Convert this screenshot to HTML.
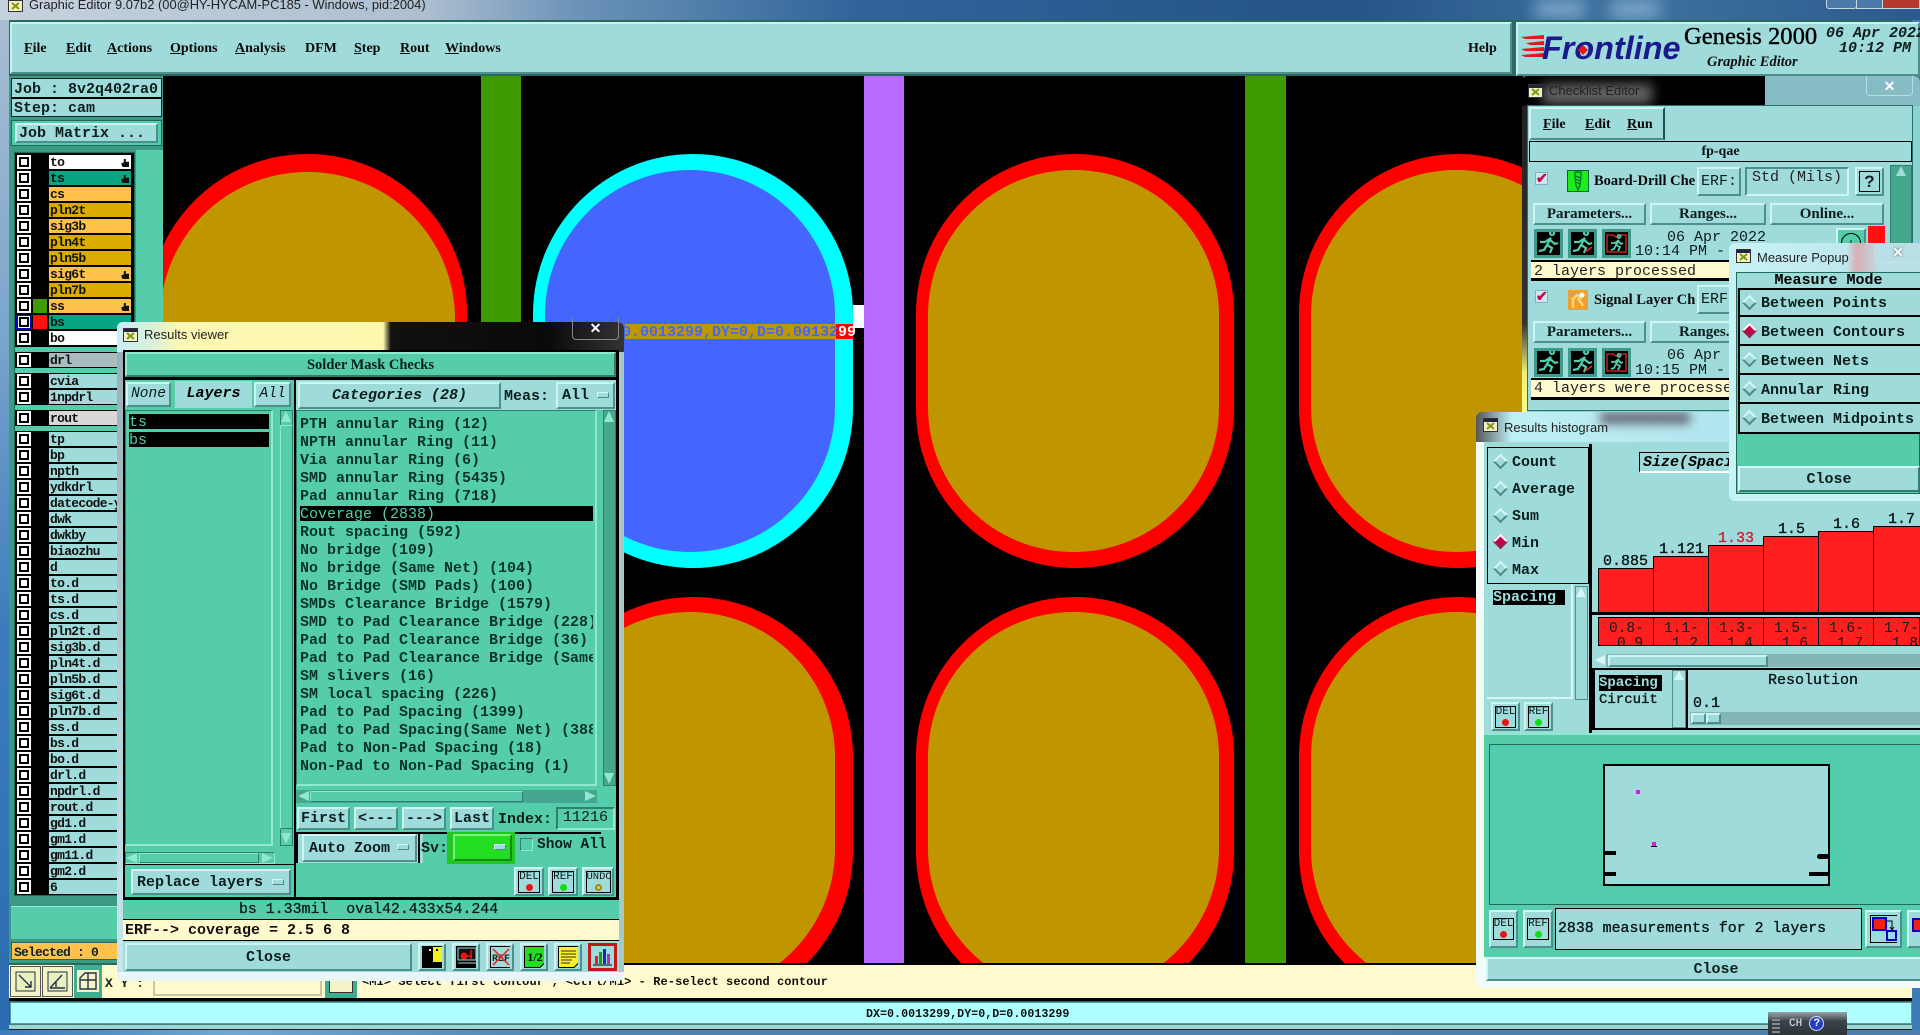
<!DOCTYPE html>
<html><head><meta charset="utf-8"><title>Graphic Editor</title>
<style>
html,body{margin:0;padding:0;width:1920px;height:1035px;overflow:hidden;background:#3d7cb5}
div,span,svg,i{box-sizing:border-box}
.a{position:absolute}
.t{position:absolute;margin-top:1px;white-space:pre;font:bold 15px/15px "Liberation Mono",monospace;color:#0c1f1c}
.s{position:absolute;white-space:pre;font:bold 14px/16px "Liberation Serif",serif;color:#0a0a0a}
.u{text-decoration:underline}
.bt{position:absolute;background:#9fdbdb;border:2px solid;border-color:#cdf5f2 #4d8f8a #4d8f8a #cdf5f2;display:flex;align-items:center;justify-content:center;white-space:pre;font:bold 15px/15px "Liberation Mono",monospace;color:#0c1f1c}
.tl{position:absolute;background:#55ccaa}
.bk{position:absolute;background:#000}
.lb{position:absolute;background:#9fdbdb}
.nm{position:absolute;left:49px;width:82px;height:14px;font:bold 13px/15px "Liberation Mono",monospace;letter-spacing:-.7px;color:#111;padding-left:1px;white-space:pre;overflow:hidden;background:#9fdbdb}
.ck{position:absolute;left:17px;width:14px;height:14px;background:#fff;padding:2px}
.ck i{display:block;width:10px;height:10px;border:2px solid #000;background:#fff}
.dm{position:absolute;width:11px;height:11px;transform:rotate(45deg);background:#9fdbdb;border:2px solid;border-color:#d4f7f5 #4d8a86 #4d8a86 #d4f7f5}
.dm.on{background:#c4004a;border-color:#fff #8a2a50 #8a2a50 #fff}
.ar{position:absolute;width:0;height:0;border:5px solid transparent}
.sb{position:absolute;background:#45a88e;border:1px solid #2f7f6f}
.hand{position:absolute;left:121px;width:8px;height:8px;background:#111;clip-path:polygon(35% 0,60% 0,60% 35%,100% 35%,100% 100%,20% 100%,0 60%,35% 40%)}
.tog{position:absolute;width:12px;height:6px;background:#9fdbdb;border:1px solid;border-color:#d4f7f5 #4d8a86 #4d8a86 #d4f7f5}
</style></head>
<body>

<!-- window title bar -->
<div class="a" style="left:0;top:0;width:1920px;height:20px;background:linear-gradient(90deg,#c5d2de 0,#aebfd0 22%,#6c93b8 30%,#2f6399 45%,#255487 70%,#3e729f 85%,#2b5a8e 100%)"></div>
<div class="a" style="left:1535px;top:0;width:50px;height:18px;background:#7fa8cc;filter:blur(8px)"></div>
<div class="a" style="left:1610px;top:0;width:50px;height:18px;background:#7fa8cc;filter:blur(8px)"></div>
<svg class="a" style="left:8px;top:0" width="16" height="13"><rect x=".5" y=".5" width="14" height="11" fill="#f5f0c8" stroke="#333"/><path d="M4 3l7 6M11 3l-7 6" stroke="#7a9a10" stroke-width="2"/></svg>
<div class="a" style="left:29px;top:-2px;font:12.9px/14px 'Liberation Sans',sans-serif;color:#222;white-space:pre">Graphic Editor 9.07b2 (00@HY-HYCAM-PC185 - Windows, pid:2004)</div>
<div class="a" style="left:1826px;top:-4px;width:31px;height:13px;border:1px solid #c8d6e4;border-radius:3px;background:#4b7baa"></div>
<div class="a" style="left:1856px;top:-4px;width:27px;height:13px;border:1px solid #c8d6e4;background:#4b7baa"></div>
<div class="a" style="left:1882px;top:-4px;width:38px;height:13px;border:1px solid #c8d6e4;background:#b5392a"></div>

<!-- frame -->
<div class="a" style="left:0;top:20px;width:9px;height:1015px;background:linear-gradient(180deg,#a8bed2,#7da6cc 30%,#3c7cbc 60%,#2a6cb0)"></div>
<div class="a" style="left:9px;top:20px;width:1903px;height:1010px;background:#2a6a60"></div>

<!-- menu bar -->
<div class="lb" style="left:10px;top:22px;width:1502px;height:52px;border:2px solid;border-color:#c8f2f0 #4d8f8a #4d8f8a #c8f2f0"></div>
<div class="s" style="left:24px;top:41px"><span class="u">F</span>ile</div>
<div class="s" style="left:66px;top:41px"><span class="u">E</span>dit</div>
<div class="s" style="left:107px;top:41px"><span class="u">A</span>ctions</div>
<div class="s" style="left:170px;top:41px"><span class="u">O</span>ptions</div>
<div class="s" style="left:235px;top:41px"><span class="u">A</span>nalysis</div>
<div class="s" style="left:305px;top:41px">DFM</div>
<div class="s" style="left:354px;top:41px"><span class="u">S</span>tep</div>
<div class="s" style="left:400px;top:41px"><span class="u">R</span>out</div>
<div class="s" style="left:445px;top:41px"><span class="u">W</span>indows</div>
<div class="s" style="left:1468px;top:41px">Help</div>

<!-- logo area -->
<div class="lb" style="left:1516px;top:22px;width:404px;height:54px;border:2px solid;border-color:#c8f2f0 #4d8f8a #4d8f8a #c8f2f0"></div>
<svg class="a" style="left:1520px;top:34px" width="26" height="26"><path d="M1 3L24 1V5L5 5ZM6 9L24 7V11L10 11ZM1 15L24 13V17L5 17ZM1 21L24 19V23L5 23Z" fill="#e81818"/></svg>
<div class="a" style="left:1542px;top:29px;font:italic bold 32.4px/38px 'Liberation Sans',sans-serif;color:#1a1a8c;white-space:pre">Frontline</div>
<svg class="a" style="left:1578px;top:45px" width="10" height="10"><path d="M5 0l5 5-5 5-5-5z" fill="#e81818"/></svg>
<div class="a" style="left:1684px;top:23px;font:24.6px/28px 'Liberation Serif',serif;-webkit-text-stroke:.4px #000;color:#000;white-space:pre">Genesis 2000</div>
<div class="a" style="left:1707px;top:54px;font:italic bold 14.5px/16px 'Liberation Serif',serif;color:#111;white-space:pre">Graphic Editor</div>
<div class="t" style="left:1826px;top:25px;font-style:italic">06 Apr 2022</div>
<div class="t" style="left:1839px;top:40px;font-style:italic">10:12 PM</div>

<!-- left panel -->
<div class="tl" style="left:9px;top:76px;width:154px;height:887px;background:#3a9a84"></div>
<div class="lb" style="left:11px;top:78px;width:151px;height:39px;border:1px solid #123"></div>
<div class="bk" style="left:12px;top:97px;width:149px;height:2px"></div>
<div class="t" style="left:14px;top:81px;letter-spacing:0">Job : 8v2q402ra0</div>
<div class="t" style="left:14px;top:100px">Step: cam</div>
<div class="tl" style="left:11px;top:120px;width:151px;height:26px;border:1px solid #1f6b5a"></div>
<div class="bt" style="left:15px;top:123px;width:143px;height:20px;justify-content:flex-start;padding-left:2px">Job Matrix ...</div>
<div class="tl" style="left:136px;top:150px;width:27px;height:813px"></div>
<div class="bk" style="left:14px;top:152px;width:121px;height:744px;border:1px solid #1f6b5a"></div>

<!-- layers -->
<div class="ck" style="top:155px"><i></i></div><div class="nm" style="top:155px;background:#fff">to</div><div class="hand" style="top:159px"></div>
<div class="ck" style="top:171px"><i></i></div><div class="nm" style="top:171px;background:#07a682">ts</div><div class="hand" style="top:175px"></div>
<div class="ck" style="top:187px"><i></i></div><div class="nm" style="top:187px;background:#ffc34d">cs</div>
<div class="ck" style="top:203px"><i></i></div><div class="nm" style="top:203px;background:#dbab00">pln2t</div>
<div class="ck" style="top:219px"><i></i></div><div class="nm" style="top:219px;background:#ffc34d">sig3b</div>
<div class="ck" style="top:235px"><i></i></div><div class="nm" style="top:235px;background:#dbab00">pln4t</div>
<div class="ck" style="top:251px"><i></i></div><div class="nm" style="top:251px;background:#dbab00">pln5b</div>
<div class="ck" style="top:267px"><i></i></div><div class="nm" style="top:267px;background:#ffc34d">sig6t</div><div class="hand" style="top:271px"></div>
<div class="ck" style="top:283px"><i></i></div><div class="nm" style="top:283px;background:#dbab00">pln7b</div>
<div class="ck" style="top:299px"><i></i></div><div class="a" style="left:33px;top:299px;width:14px;height:14px;background:#3f9a00"></div><div class="nm" style="top:299px;background:#ffc34d">ss</div><div class="hand" style="top:303px"></div>
<div class="a" style="left:16px;top:315px;width:16px;height:15px;background:#0000c0;padding:2px 3px"><div style="width:10px;height:10px;border:2px solid #000;background:#fff;outline:1px solid #fff"></div></div><div class="a" style="left:33px;top:315px;width:14px;height:14px;background:#f11"></div><div class="nm" style="top:315px;background:#07a682">bs</div>
<div class="ck" style="top:331px"><i></i></div><div class="nm" style="top:331px;background:#fff">bo</div>
<div class="tl" style="left:15px;top:347px;width:119px;height:5px"></div>
<div class="ck" style="top:353px"><i></i></div><div class="nm" style="top:353px;background:#a8bcc0">drl</div>
<div class="tl" style="left:15px;top:368px;width:119px;height:5px"></div>
<div class="ck" style="top:374px"><i></i></div><div class="nm" style="top:374px">cvia</div>
<div class="ck" style="top:390px"><i></i></div><div class="nm" style="top:390px">1npdrl</div>
<div class="tl" style="left:15px;top:405px;width:119px;height:5px"></div>
<div class="ck" style="top:411px"><i></i></div><div class="nm" style="top:411px;background:#d8d8d8">rout</div>
<div class="tl" style="left:15px;top:426px;width:119px;height:5px"></div>
<div class="ck" style="top:432px"><i></i></div><div class="nm" style="top:432px">tp</div>
<div class="ck" style="top:448px"><i></i></div><div class="nm" style="top:448px">bp</div>
<div class="ck" style="top:464px"><i></i></div><div class="nm" style="top:464px">npth</div>
<div class="ck" style="top:480px"><i></i></div><div class="nm" style="top:480px">ydkdrl</div>
<div class="ck" style="top:496px"><i></i></div><div class="nm" style="top:496px">datecode-y</div>
<div class="ck" style="top:512px"><i></i></div><div class="nm" style="top:512px">dwk</div>
<div class="ck" style="top:528px"><i></i></div><div class="nm" style="top:528px">dwkby</div>
<div class="ck" style="top:544px"><i></i></div><div class="nm" style="top:544px">biaozhu</div>
<div class="ck" style="top:560px"><i></i></div><div class="nm" style="top:560px">d</div>
<div class="ck" style="top:576px"><i></i></div><div class="nm" style="top:576px">to.d</div>
<div class="ck" style="top:592px"><i></i></div><div class="nm" style="top:592px">ts.d</div>
<div class="ck" style="top:608px"><i></i></div><div class="nm" style="top:608px">cs.d</div>
<div class="ck" style="top:624px"><i></i></div><div class="nm" style="top:624px">pln2t.d</div>
<div class="ck" style="top:640px"><i></i></div><div class="nm" style="top:640px">sig3b.d</div>
<div class="ck" style="top:656px"><i></i></div><div class="nm" style="top:656px">pln4t.d</div>
<div class="ck" style="top:672px"><i></i></div><div class="nm" style="top:672px">pln5b.d</div>
<div class="ck" style="top:688px"><i></i></div><div class="nm" style="top:688px">sig6t.d</div>
<div class="ck" style="top:704px"><i></i></div><div class="nm" style="top:704px">pln7b.d</div>
<div class="ck" style="top:720px"><i></i></div><div class="nm" style="top:720px">ss.d</div>
<div class="ck" style="top:736px"><i></i></div><div class="nm" style="top:736px">bs.d</div>
<div class="ck" style="top:752px"><i></i></div><div class="nm" style="top:752px">bo.d</div>
<div class="ck" style="top:768px"><i></i></div><div class="nm" style="top:768px">drl.d</div>
<div class="ck" style="top:784px"><i></i></div><div class="nm" style="top:784px">npdrl.d</div>
<div class="ck" style="top:800px"><i></i></div><div class="nm" style="top:800px">rout.d</div>
<div class="ck" style="top:816px"><i></i></div><div class="nm" style="top:816px">gd1.d</div>
<div class="ck" style="top:832px"><i></i></div><div class="nm" style="top:832px">gm1.d</div>
<div class="ck" style="top:848px"><i></i></div><div class="nm" style="top:848px">gm11.d</div>
<div class="ck" style="top:864px"><i></i></div><div class="nm" style="top:864px">gm2.d</div>
<div class="ck" style="top:880px"><i></i></div><div class="nm" style="top:880px">6</div>

<div class="tl" style="left:11px;top:906px;width:150px;height:33px;border-top:1px solid #9fe8d8"></div>
<div class="a" style="left:11px;top:942px;width:118px;height:18px;background:#ffc34d;border:1px solid #1f6b5a"></div>
<div class="t" style="left:14px;top:944px;font-size:13px;letter-spacing:-.8px">Selected : 0</div>

<!-- canvas -->
<div class="a" style="left:163px;top:76px;width:1360px;height:887px;background:#000;overflow:hidden">
<svg width="1360" height="887" viewBox="163 76 1360 887">
<rect x="481" y="76" width="40" height="887" fill="#3f9a00"/>
<rect x="864" y="76" width="40" height="887" fill="#b86cff"/>
<rect x="1245" y="76" width="41" height="887" fill="#3f9a00"/>
<g fill="#f00">
<rect x="148" y="154" width="319" height="414" rx="159"/>
<rect x="916" y="154" width="318" height="414" rx="159"/>
<rect x="1299" y="154" width="318" height="414" rx="159"/>
<rect x="533" y="597" width="320" height="414" rx="160"/>
<rect x="916" y="597" width="318" height="414" rx="159"/>
<rect x="1299" y="597" width="318" height="414" rx="159"/>
</g>
<rect x="533" y="154" width="320" height="414" rx="160" fill="#0ff"/>
<g fill="#bf9600">
<rect x="160" y="172" width="295" height="382" rx="147"/>
<rect x="928" y="170" width="291" height="382" rx="145"/>
<rect x="1311" y="170" width="291" height="382" rx="145"/>
<rect x="545" y="612" width="290" height="382" rx="145"/>
<rect x="928" y="612" width="291" height="382" rx="145"/>
<rect x="1311" y="612" width="291" height="382" rx="145"/>
</g>
<rect x="545" y="170" width="290" height="382" rx="145" fill="#4466ff"/>
<rect x="625" y="324" width="211" height="15" fill="#bf9600"/>
<rect x="836" y="324" width="17" height="15" fill="#f00"/>
<rect x="853" y="305" width="11" height="23" fill="#fff"/>
<text x="595" y="336" font-family="Liberation Mono,monospace" font-size="15" font-weight="bold" fill="#4466ff">DX=0.0013299,DY=0,D=0.00132<tspan fill="#fff">99</tspan></text>
</svg>
</div>
<div class="bk" style="left:163px;top:963px;width:1757px;height:2px"></div>

<!-- bottom toolbar -->
<div class="a" style="left:9px;top:965px;width:1903px;height:33px;background:#fffacd"></div>
<div class="a" style="left:10px;top:966px;width:31px;height:31px;background:#f4f4c8;border:1px solid #555;padding:4px"><svg width="21" height="21"><rect x="1" y="1" width="19" height="19" fill="#e8f0c0" stroke="#234" stroke-width="1"/><path d="M4 4L16 16M16 10V16H10" fill="none" stroke="#234" stroke-width="1.4"/></svg></div>
<div class="a" style="left:42px;top:966px;width:31px;height:31px;background:#f4f4c8;border:1px solid #555;padding:4px"><svg width="21" height="21"><rect x="1" y="1" width="19" height="19" fill="#e8f0c0" stroke="#234"/><path d="M3 17H18M3 17L15 4M9 11v5" fill="none" stroke="#234" stroke-width="1.4"/></svg></div>
<div class="a" style="left:74px;top:965px;width:28px;height:33px;background:#3fae90;padding:5px 3px"><svg width="22" height="22"><rect width="22" height="22" fill="#f4f4c8"/><path d="M3 19V8L8 3H19V19ZM3 10H19M11 3V19" fill="none" stroke="#234" stroke-width="1.4"/></svg></div>
<div class="t" style="left:105px;top:975px;font-size:13px">X Y :</div>
<div class="a" style="left:153px;top:967px;width:169px;height:29px;background:#fffacd;border:2px solid #c9c9a0"></div>
<div class="a" style="left:325px;top:965px;width:32px;height:33px;background:#3fae90;padding:4px"><div style="width:24px;height:24px;background:#f4f4c8;border:1px solid #333"></div></div>
<div class="t" style="left:362px;top:975px;font-size:12px;line-height:13px;color:#111;letter-spacing:.08px">&lt;M1&gt; Select first contour ; &lt;Ctrl/M1&gt; - Re-select second contour</div>
<div class="bk" style="left:9px;top:998px;width:1903px;height:3px"></div>
<div class="a" style="left:10px;top:1002px;width:1902px;height:22px;background:#b0ffff;border:1px solid #5a9a9a"></div>
<div class="t" style="left:866px;top:1007px;font-size:11.7px;line-height:12px;color:#111">DX=0.0013299,DY=0,D=0.0013299</div>
<div class="a" style="left:9px;top:1024px;width:1903px;height:6px;background:#9ed6d6;border-bottom:1px solid #222;border-top:1px solid #44807d"></div>
<div class="a" style="left:0;top:1030px;width:1920px;height:5px;background:linear-gradient(90deg,#3c7cbc,#6fa8d8 12%,#4e83b5 30%,#4c7fae)"></div>

<!-- Checklist Editor -->
<div class="a" style="left:1522px;top:76px;width:398px;height:340px;background:#000;border-radius:6px 6px 0 0;overflow:hidden">
 <div class="a" style="left:243px;top:0;width:155px;height:30px;background:#86bcc4"></div>
 <div class="a" style="left:20px;top:8px;width:110px;height:20px;background:#666;filter:blur(6px)"></div>
 <div class="a" style="left:0;top:30px;width:398px;height:310px;background:#8bd2d2"></div>
 <div class="a" style="left:0;top:30px;width:5px;height:310px;background:linear-gradient(180deg,#222,#333 70%,#eeee77 86%,#ffff88)"></div>
</div>
<svg class="a" style="left:1528px;top:84px" width="16" height="15"><rect x=".5" y=".5" width="14" height="13" fill="#f5f0c8" stroke="#333"/><rect x="1" y="1" width="13" height="3" fill="#224"/><path d="M4 5l7 6M11 5l-7 6" stroke="#7a9a10" stroke-width="2"/></svg>
<div class="a" style="left:1549px;top:83px;font:13px/15px 'Liberation Sans',sans-serif;color:#222;white-space:pre">Checklist Editor</div>
<div class="a" style="left:1866px;top:76px;width:47px;height:20px;border:1px solid #b8dfe4;border-top:0;border-radius:0 0 4px 4px;color:#fff;font:bold 14px/20px 'Liberation Sans',sans-serif;text-align:center">✕</div>
<div class="lb" style="left:1527px;top:105px;width:386px;height:306px;border:1px solid #2c6f66"></div>
<div class="bt" style="left:1529px;top:107px;width:136px;height:33px;border-right-color:#1f4f4a"></div>
<div class="s" style="left:1543px;top:117px"><span class="u">F</span>ile</div>
<div class="s" style="left:1585px;top:117px"><span class="u">E</span>dit</div>
<div class="s" style="left:1627px;top:117px"><span class="u">R</span>un</div>
<div class="lb" style="left:1529px;top:141px;width:383px;height:21px;border:1px solid #000;text-align:center;font:bold 14px/19px 'Liberation Serif',serif;color:#111">fp-qae</div>
<div class="sb" style="left:1890px;top:165px;width:22px;height:246px"></div>
<div class="ar" style="left:1896px;top:166px;border-bottom:10px solid #9fdbdb;border-top:0"></div>
<!-- row1 -->
<div class="a" style="left:1535px;top:172px;width:13px;height:13px;background:#cbe9e9;border:1px solid #8ac;color:#c4004a;font:bold 14px/11px 'Liberation Sans',sans-serif">✔</div>
<div class="a" style="left:1567px;top:170px;width:22px;height:22px;background:#18ee18;border:1px solid #064"><svg width="20" height="20"><path d="M7 1h6v4l-1 9-2 5-2-5-1-9zM7 5l6 2M7.500 8l5 2M8 11l4 2" fill="none" stroke="#063" stroke-width="1.200"/></svg></div>
<div class="s" style="left:1594px;top:173px;width:101px;overflow:hidden;font-size:14.5px">Board-Drill Chec</div>
<div class="bt" style="left:1697px;top:167px;width:44px;height:29px;font-weight:normal">ERF:</div>
<div class="a" style="left:1745px;top:167px;width:104px;height:29px;border:2px solid;border-color:#4d8f8a #cdf5f2 #cdf5f2 #4d8f8a;font:15px/15px 'Liberation Mono',monospace;padding:1px 0 0 5px;color:#222;white-space:pre">Std (Mils)</div>
<div class="bt" style="left:1855px;top:167px;width:29px;height:29px;padding:2px"><div style="width:21px;height:21px;border:1px solid #000;font:bold 17px/19px 'Liberation Sans',sans-serif;text-align:center">?</div></div>
<div class="bt" style="left:1533px;top:203px;width:113px;height:22px;font:bold 15px/16px 'Liberation Serif',serif">Parameters...</div>
<div class="bt" style="left:1650px;top:203px;width:116px;height:22px;font:bold 15px/16px 'Liberation Serif',serif">Ranges...</div>
<div class="bt" style="left:1770px;top:203px;width:114px;height:22px;font:bold 15px/16px 'Liberation Serif',serif">Online...</div>
<!-- runner icons row1 -->
<div class="a" style="left:1534px;top:229px;width:29px;height:29px;background:#000;border:3px solid #3e9a8a"><svg width="23" height="23"><path d="M15 3a2 2 0 1 1 .1 0M14 6L8 10H3M14 6L10 13l5 3-2 5M10 13L7 18l-5 1M13 8l5 4 3-1" fill="none" stroke="#55ccaa" stroke-width="2.2"/></svg></div>
<div class="a" style="left:1568px;top:229px;width:29px;height:29px;background:#000;border:3px solid #3e9a8a"><svg width="23" height="23"><path d="M15 3a2 2 0 1 1 .1 0M14 6L8 10H3M14 6L10 13l5 3-2 5M10 13L7 18l-5 1M13 8l5 4 3-1" fill="none" stroke="#55ccaa" stroke-width="2.2"/><path d="M14 20l7-5" stroke="#e22" stroke-width="1.5"/></svg></div>
<div class="a" style="left:1602px;top:229px;width:29px;height:29px;background:#000;border:3px solid #3e9a8a"><svg width="23" height="23"><path d="M2 3h6l3 2 3-2h7v17H2z" fill="none" stroke="#e22" stroke-width="1.3"/><path d="M14 6a1.500 1.500 0 1 1 .1 0M14 8L10 11H6M14 8l-3 5 4 2-2 4M11 13l-2 4-3 1M13 9l3 3 2-1" fill="none" stroke="#55ccaa" stroke-width="1.800"/></svg></div>
<div class="t" style="left:1667px;top:229px;font-weight:normal">06 Apr 2022</div>
<div class="t" style="left:1635px;top:243px;font-weight:normal">10:14 PM -</div>
<div class="bt" style="left:1836px;top:228px;width:30px;height:30px;background:#55ccaa"><div style="width:20px;height:20px;border:1px solid #000;border-radius:50%;text-align:center;font:14px/18px 'Liberation Sans',sans-serif">+</div></div>
<div class="a" style="left:1868px;top:226px;width:17px;height:34px;background:#f11"></div>
<div class="bk" style="left:1531px;top:260px;width:355px;height:2px"></div>
<div class="a" style="left:1531px;top:262px;width:355px;height:19px;background:#fffacd;font:15px/19px 'Liberation Mono',monospace;color:#222;padding-left:3px;white-space:pre;border-bottom:3px solid #000">2 layers processed</div>
<!-- row2 -->
<div class="a" style="left:1535px;top:290px;width:13px;height:13px;background:#cbe9e9;border:1px solid #8ac;color:#c4004a;font:bold 14px/11px 'Liberation Sans',sans-serif">✔</div>
<div class="a" style="left:1568px;top:290px;width:20px;height:20px;background:#f0a030"><svg width="20" height="20"><path d="M5 18V9l4-4 5 3M10 8l5 8" fill="none" stroke="#ffd880" stroke-width="2.500"/><circle cx="14" cy="5" r="2.500" fill="#ffe"/></svg></div>
<div class="s" style="left:1594px;top:292px;width:101px;overflow:hidden;font-size:14.5px">Signal Layer Che</div>
<div class="bt" style="left:1697px;top:285px;width:44px;height:29px;font-weight:normal">ERF:</div>
<div class="bt" style="left:1533px;top:321px;width:113px;height:22px;font:bold 15px/16px 'Liberation Serif',serif">Parameters...</div>
<div class="bt" style="left:1650px;top:321px;width:116px;height:22px;font:bold 15px/16px 'Liberation Serif',serif">Ranges...</div>
<div class="a" style="left:1534px;top:348px;width:29px;height:29px;background:#000;border:3px solid #3e9a8a"><svg width="23" height="23"><path d="M15 3a2 2 0 1 1 .1 0M14 6L8 10H3M14 6L10 13l5 3-2 5M10 13L7 18l-5 1M13 8l5 4 3-1" fill="none" stroke="#55ccaa" stroke-width="2.2"/></svg></div>
<div class="a" style="left:1568px;top:348px;width:29px;height:29px;background:#000;border:3px solid #3e9a8a"><svg width="23" height="23"><path d="M15 3a2 2 0 1 1 .1 0M14 6L8 10H3M14 6L10 13l5 3-2 5M10 13L7 18l-5 1M13 8l5 4 3-1" fill="none" stroke="#55ccaa" stroke-width="2.2"/><path d="M14 20l7-5" stroke="#e22" stroke-width="1.5"/></svg></div>
<div class="a" style="left:1602px;top:348px;width:29px;height:29px;background:#000;border:3px solid #3e9a8a"><svg width="23" height="23"><path d="M2 3h6l3 2 3-2h7v17H2z" fill="none" stroke="#e22" stroke-width="1.3"/><path d="M14 6a1.500 1.500 0 1 1 .1 0M14 8L10 11H6M14 8l-3 5 4 2-2 4M11 13l-2 4-3 1M13 9l3 3 2-1" fill="none" stroke="#55ccaa" stroke-width="1.800"/></svg></div>
<div class="t" style="left:1667px;top:347px;font-weight:normal">06 Apr 2022</div>
<div class="t" style="left:1635px;top:362px;font-weight:normal">10:15 PM -</div>
<div class="bk" style="left:1531px;top:378px;width:355px;height:2px"></div>
<div class="a" style="left:1531px;top:380px;width:355px;height:20px;background:#fffacd;font:15px/18px 'Liberation Mono',monospace;color:#222;padding-left:3px;white-space:pre;border-bottom:3px solid #000">4 layers were processed</div>

<!-- Results histogram -->
<div class="a" style="left:1476px;top:412px;width:444px;height:576px;background:#f4fbfb;border-radius:6px 0 0 6px;overflow:hidden">
 <div class="a" style="left:0;top:0;width:444px;height:30px;background:linear-gradient(90deg,#555 0,#bdeff4 8%,#b7e8f0 40%,#a6dcea 100%)"></div>
 <div class="a" style="left:124px;top:0;width:90px;height:12px;background:#667;filter:blur(5px)"></div>
</div>
<svg class="a" style="left:1483px;top:418px" width="16" height="15"><rect x=".5" y=".5" width="14" height="13" fill="#f5f0c8" stroke="#333"/><rect x="1" y="1" width="13" height="3" fill="#224"/><path d="M4 5l7 6M11 5l-7 6" stroke="#7a9a10" stroke-width="2"/></svg>
<div class="a" style="left:1504px;top:420px;font:13px/15px 'Liberation Sans',sans-serif;color:#222;white-space:pre">Results histogram</div>
<div class="lb" style="left:1484px;top:442px;width:436px;height:291px;background:#9fdbdb"></div>
<div class="bk" style="left:1589px;top:444px;width:3px;height:289px"></div>
<div class="lb" style="left:1487px;top:447px;width:102px;height:137px;border:1px solid #000"></div>
<div class="dm" style="left:1495px;top:456px"></div><div class="t" style="left:1512px;top:454px">Count</div>
<div class="dm" style="left:1495px;top:483px"></div><div class="t" style="left:1512px;top:481px">Average</div>
<div class="dm" style="left:1495px;top:510px"></div><div class="t" style="left:1512px;top:508px">Sum</div>
<div class="dm on" style="left:1495px;top:536px"></div><div class="t" style="left:1512px;top:535px">Min</div>
<div class="dm" style="left:1495px;top:563px"></div><div class="t" style="left:1512px;top:562px">Max</div>
<div class="a" style="left:1487px;top:584px;width:86px;height:115px;border-right:2px solid #d4f7f5;border-bottom:2px solid #d4f7f5"></div>
<div class="bk" style="left:1493px;top:590px;width:72px;height:15px"></div>
<div class="t" style="left:1493px;top:589px;color:#9fdbdb">Spacing</div>
<div class="a" style="left:1575px;top:586px;width:13px;height:114px;background:#9fdbdb;border:1px solid #4d8f8a"></div>
<div class="ar" style="left:1576px;top:587px;border-bottom:10px solid #d4f7f5;border-top:0"></div>
<div class="bt" style="left:1491px;top:702px;width:29px;height:29px;padding:2px"><div style="width:22px;height:22px;border:1px solid #000;font:11px/11px 'Liberation Mono',monospace;text-align:center;font-weight:normal">DEL<div style="width:7px;height:7px;background:#e11;border-radius:50%;margin:1px auto"></div></div></div>
<div class="bt" style="left:1524px;top:702px;width:29px;height:29px;padding:2px"><div style="width:22px;height:22px;border:1px solid #000;font:11px/11px 'Liberation Mono',monospace;text-align:center;font-weight:normal">REF<div style="width:7px;height:7px;background:#1d1;border-radius:50%;margin:1px auto"></div></div></div>
<div class="a" style="left:1639px;top:452px;width:90px;height:21px;background:#9fdbdb;border:1px solid #000;border-bottom:2px solid #fff;border-right:0;font:italic bold 15px/19px 'Liberation Mono',monospace;padding-left:3px;white-space:pre;overflow:hidden">Size(Spacing)</div>
<!-- bars -->
<div class="a" style="left:1598px;top:568px;width:56px;height:44px;background:#ff1f1f;border:1px solid #000;border-bottom:0"></div>
<div class="a" style="left:1653px;top:556px;width:56px;height:56px;background:#ff1f1f;border:1px solid #000;border-bottom:0"></div>
<div class="a" style="left:1708px;top:545px;width:56px;height:67px;background:#ff1f1f;border:1px solid #000;border-bottom:0"></div>
<div class="a" style="left:1763px;top:536px;width:56px;height:76px;background:#ff1f1f;border:1px solid #000;border-bottom:0"></div>
<div class="a" style="left:1818px;top:531px;width:56px;height:81px;background:#ff1f1f;border:1px solid #000;border-bottom:0"></div>
<div class="a" style="left:1873px;top:526px;width:47px;height:86px;background:#ff1f1f;border:1px solid #000;border-bottom:0;border-right:0"></div>
<div class="t" style="left:1603px;top:553px;font-weight:normal;-webkit-text-stroke:.3px #000">0.885</div>
<div class="t" style="left:1659px;top:541px;font-weight:normal;-webkit-text-stroke:.3px #000">1.121</div>
<div class="t" style="left:1718px;top:530px;font-weight:normal;color:#d02030;-webkit-text-stroke:.3px #d02030">1.33</div>
<div class="t" style="left:1778px;top:521px;font-weight:normal;-webkit-text-stroke:.3px #000">1.5</div>
<div class="t" style="left:1833px;top:516px;font-weight:normal;-webkit-text-stroke:.3px #000">1.6</div>
<div class="t" style="left:1888px;top:511px;font-weight:normal;-webkit-text-stroke:.3px #000">1.7</div>
<div class="bk" style="left:1592px;top:612px;width:328px;height:3px"></div>
<div class="a" style="left:1598px;top:617px;width:322px;height:29px;background:#ff1f1f;border:1px solid #000;overflow:hidden">
 <div class="t" style="left:10px;top:3px;font-size:14.500px;font-weight:normal">0.8-</div><div class="t" style="left:18px;top:18px;font-size:14.500px;font-weight:normal">0.9</div>
 <div class="bk" style="left:54px;top:0;width:1px;height:29px"></div>
 <div class="t" style="left:65px;top:3px;font-size:14.500px;font-weight:normal">1.1-</div><div class="t" style="left:73px;top:18px;font-size:14.500px;font-weight:normal">1.2</div>
 <div class="bk" style="left:109px;top:0;width:1px;height:29px"></div>
 <div class="t" style="left:120px;top:3px;font-size:14.500px;font-weight:normal">1.3-</div><div class="t" style="left:128px;top:18px;font-size:14.500px;font-weight:normal">1.4</div>
 <div class="bk" style="left:164px;top:0;width:1px;height:29px"></div>
 <div class="t" style="left:175px;top:3px;font-size:14.500px;font-weight:normal">1.5-</div><div class="t" style="left:183px;top:18px;font-size:14.500px;font-weight:normal">1.6</div>
 <div class="bk" style="left:219px;top:0;width:1px;height:29px"></div>
 <div class="t" style="left:230px;top:3px;font-size:14.500px;font-weight:normal">1.6-</div><div class="t" style="left:238px;top:18px;font-size:14.500px;font-weight:normal">1.7</div>
 <div class="bk" style="left:274px;top:0;width:1px;height:29px"></div>
 <div class="t" style="left:285px;top:3px;font-size:14.500px;font-weight:normal">1.7-</div><div class="t" style="left:293px;top:18px;font-size:14.500px;font-weight:normal">1.8</div>
</div>
<div class="a" style="left:1594px;top:654px;width:326px;height:13px;background:#85b5b5"></div>
<div class="a" style="left:1594px;top:654px;width:12px;height:13px;background:#9fdbdb"></div>
<div class="ar" style="left:1595px;top:655px;border-right:10px solid #d4f7f5;border-left:0"></div>
<div class="bt" style="left:1608px;top:655px;width:160px;height:12px"></div>
<div class="bk" style="left:1592px;top:668px;width:328px;height:2px"></div>
<div class="bk" style="left:1592px;top:668px;width:3px;height:62px"></div>
<div class="bk" style="left:1599px;top:675px;width:63px;height:16px"></div>
<div class="t" style="left:1599px;top:675px;color:#9fdbdb;font-size:14px">Spacing</div>
<div class="t" style="left:1599px;top:692px;font-weight:normal;-webkit-text-stroke:.3px #000;font-size:14px">Circuit</div>
<div class="a" style="left:1672px;top:670px;width:14px;height:58px;background:#9fdbdb;border:1px solid #4d8f8a"></div>
<div class="ar" style="left:1674px;top:671px;border-bottom:9px solid #d4f7f5;border-top:0"></div>
<div class="a" style="left:1686px;top:670px;width:2px;height:58px;background:#000"></div>
<div class="t" style="left:1768px;top:672px;font-weight:normal;-webkit-text-stroke:.3px #000">Resolution</div>
<div class="t" style="left:1693px;top:695px;font-weight:normal;-webkit-text-stroke:.3px #000">0.1</div>
<div class="a" style="left:1690px;top:712px;width:230px;height:13px;background:#85b5b5"></div>
<div class="bt" style="left:1691px;top:713px;width:15px;height:11px"></div>
<div class="bt" style="left:1706px;top:713px;width:15px;height:11px"></div>
<div class="bk" style="left:1592px;top:728px;width:328px;height:2px"></div>
<div class="tl" style="left:1484px;top:733px;width:436px;height:224px;background:#55ccaa;border-top:2px solid #8fe8d0"></div>
<div class="a" style="left:1489px;top:744px;width:431px;height:161px;background:#52cdab;border:1px solid #1f6b5a;border-right:0"></div>
<div class="lb" style="left:1603px;top:764px;width:227px;height:122px;border:2px solid #000"></div>
<div class="a" style="left:1636px;top:790px;width:4px;height:4px;background:#d020d0"></div>
<div class="a" style="left:1652px;top:842px;width:4px;height:4px;background:#d020d0"></div>
<div class="bk" style="left:1651px;top:846px;width:6px;height:1px"></div>
<div class="bk" style="left:1603px;top:851px;width:13px;height:4px"></div>
<div class="bk" style="left:1603px;top:872px;width:13px;height:4px"></div>
<div class="bk" style="left:1817px;top:854px;width:12px;height:5px;border-radius:3px"></div>
<div class="bk" style="left:1809px;top:872px;width:20px;height:4px"></div>
<div class="bt" style="left:1489px;top:910px;width:29px;height:38px;padding:2px"><div style="width:22px;height:22px;border:1px solid #000;font:11px/11px 'Liberation Mono',monospace;text-align:center;font-weight:normal">DEL<div style="width:7px;height:7px;background:#e11;border-radius:50%;margin:1px auto"></div></div></div>
<div class="bt" style="left:1523px;top:910px;width:30px;height:38px;padding:2px"><div style="width:22px;height:22px;border:1px solid #000;font:11px/11px 'Liberation Mono',monospace;text-align:center;font-weight:normal">REF<div style="width:7px;height:7px;background:#1d1;border-radius:50%;margin:1px auto"></div></div></div>
<div class="lb" style="left:1555px;top:908px;width:307px;height:42px;border:1px solid #000"></div>
<div class="t" style="left:1558px;top:921px;font-size:14.900px;font-weight:normal;-webkit-text-stroke:.3px #000">2838 measurements for 2 layers</div>
<div class="bt" style="left:1865px;top:910px;width:37px;height:38px;padding:3px"><svg width="29" height="28"><rect x=".5" y=".5" width="28" height="27" fill="#9fdbdb" stroke="#000"/><rect x="3" y="3" width="13" height="12" fill="#e21" stroke="#00c" stroke-width="2"/><rect x="17" y="16" width="9" height="9" fill="#9fdbdb" stroke="#00c" stroke-width="2"/><path d="M17 6h5v8M20 12l2 3 2-3" fill="none" stroke="#000"/></svg></div>
<div class="bt" style="left:1907px;top:910px;width:20px;height:38px"><div class="a" style="left:3px;top:6px;width:14px;height:14px;background:#e21;border:2px solid #00c"></div></div>
<div class="bt" style="left:1486px;top:957px;width:460px;height:24px">Close</div>

<!-- Measure Popup -->
<div class="a" style="left:1729px;top:243px;width:191px;height:258px;background:#c7f2f6;border-radius:6px 0 0 6px"></div>
<div class="a" style="left:1735px;top:243px;width:185px;height:29px;background:linear-gradient(90deg,#c7f2f6,#bfe8ee 60%,#d8aeb4 66%,#b8e0e6 78%)"></div>
<svg class="a" style="left:1736px;top:249px" width="16" height="15"><rect x=".5" y=".5" width="14" height="13" fill="#f5f0c8" stroke="#333"/><rect x="1" y="1" width="13" height="3" fill="#224"/><path d="M4 5l7 6M11 5l-7 6" stroke="#7a9a10" stroke-width="2"/></svg>
<div class="a" style="left:1757px;top:250px;font:13px/15px 'Liberation Sans',sans-serif;color:#222;white-space:pre">Measure Popup</div>
<div class="a" style="left:1875px;top:243px;width:45px;height:20px;border:1px solid #c8e4ea;border-top:0;border-right:0;border-radius:0 0 0 4px;color:#fff;font:bold 14px/19px 'Liberation Sans',sans-serif;text-align:center;text-shadow:0 0 2px #555">✕</div>
<div class="tl" style="left:1736px;top:272px;width:184px;height:222px;border:1px solid #1f6b5a"></div>
<div class="lb" style="left:1737px;top:273px;width:183px;height:15px;text-align:center;font:bold 15px/16px 'Liberation Mono',monospace">Measure Mode</div>
<div class="lb" style="left:1738px;top:288px;width:182px;height:29px;border:2px solid #000;border-right:0"></div>
<div class="lb" style="left:1738px;top:317px;width:182px;height:29px;border:2px solid #000;border-right:0;border-top:0"></div>
<div class="lb" style="left:1738px;top:346px;width:182px;height:29px;border:2px solid #000;border-right:0;border-top:0"></div>
<div class="lb" style="left:1738px;top:375px;width:182px;height:29px;border:2px solid #000;border-right:0;border-top:0"></div>
<div class="lb" style="left:1738px;top:404px;width:182px;height:30px;border:2px solid #000;border-right:0;border-top:0"></div>
<div class="dm" style="left:1744px;top:297px"></div><div class="t" style="left:1761px;top:295px">Between Points</div>
<div class="dm on" style="left:1744px;top:325px"></div><div class="t" style="left:1761px;top:324px">Between Contours</div>
<div class="dm" style="left:1744px;top:354px"></div><div class="t" style="left:1761px;top:353px">Between Nets</div>
<div class="dm" style="left:1744px;top:383px"></div><div class="t" style="left:1761px;top:382px">Annular Ring</div>
<div class="dm" style="left:1744px;top:412px"></div><div class="t" style="left:1761px;top:411px">Between Midpoints</div>
<div class="bt" style="left:1738px;top:466px;width:182px;height:26px;border-color:#d4f7f5 #2f7f6f #2f7f6f #d4f7f5">Close</div>

<!-- Results viewer -->
<div class="a" style="left:117px;top:322px;width:507px;height:659px;background:#e8f6f8;border-radius:6px;overflow:hidden">
 <div class="a" style="left:0;top:0;width:507px;height:30px;background:linear-gradient(90deg,#c9eef5 0,#d9f0d8 7%,#fbf7b4 12%,#fdf8ae 52.5%,#111 54%,#0a0a0a 85%,#333 100%)"></div>
 <div class="a" style="left:0;top:30px;width:6px;height:620px;background:linear-gradient(180deg,#9ab0b8,#c8e6ee)"></div>
 <div class="a" style="left:501px;top:30px;width:6px;height:620px;background:#a8c8c8"></div>
</div>
<svg class="a" style="left:123px;top:328px" width="16" height="15"><rect x=".5" y=".5" width="14" height="13" fill="#f5f0c8" stroke="#333"/><rect x="1" y="1" width="13" height="3" fill="#224"/><path d="M4 5l7 6M11 5l-7 6" stroke="#7a9a10" stroke-width="2"/></svg>
<div class="a" style="left:144px;top:327px;font:13px/15px 'Liberation Sans',sans-serif;color:#222;white-space:pre">Results viewer</div>
<div class="a" style="left:572px;top:318px;width:47px;height:22px;border:1px solid #888;border-top:0;border-radius:0 0 4px 4px;color:#fff;font:bold 14px/20px 'Liberation Sans',sans-serif;text-align:center">✕</div>
<div class="bk" style="left:123px;top:350px;width:496px;height:622px"></div>
<div class="bt" style="left:125px;top:352px;width:491px;height:25px;background:#55ccaa;font:bold 14.500px/16px 'Liberation Serif',serif;border-color:#8fe8d0 #2f7f6f #2f7f6f #8fe8d0">Solder Mask Checks</div>
<!-- left -->
<div class="tl" style="left:125px;top:380px;width:169px;height:517px"></div>
<div class="bt" style="left:126px;top:382px;width:45px;height:25px;font:italic 14.500px/15px 'Liberation Mono',monospace">None</div>
<div class="lb" style="left:175px;top:381px;width:77px;height:27px;text-align:center;font:italic bold 15px/26px 'Liberation Mono',monospace">Layers</div>
<div class="bt" style="left:254px;top:382px;width:37px;height:25px;font:italic 14.500px/15px 'Liberation Mono',monospace">All</div>
<div class="a" style="left:125px;top:410px;width:148px;height:436px;border:1px solid #2f7f6f;border-right:2px solid #8fe8d0;border-bottom:2px solid #8fe8d0"></div>
<div class="bk" style="left:129px;top:414px;width:140px;height:15px"></div><div class="t" style="left:129px;top:414px;color:#55ccaa;font-weight:normal">ts</div>
<div class="bk" style="left:129px;top:432px;width:140px;height:15px"></div><div class="t" style="left:129px;top:432px;color:#55ccaa;font-weight:normal">bs</div>
<div class="sb" style="left:280px;top:410px;width:13px;height:436px;background:#55ccaa"></div>
<div class="ar" style="left:281px;top:411px;border-bottom:11px solid #8fe8d0;border-top:0"></div>
<div class="a" style="left:280px;top:425px;width:13px;height:404px;border:1px solid;border-color:#8fe8d0 #2f7f6f #2f7f6f #8fe8d0;background:#55ccaa"></div>
<div class="ar" style="left:281px;top:833px;border-top:11px solid #8fe8d0;border-bottom:0"></div>
<div class="a" style="left:125px;top:852px;width:150px;height:12px;border:1px solid;border-color:#2f7f6f #8fe8d0 #8fe8d0 #2f7f6f"></div>
<div class="ar" style="left:126px;top:853px;border-right:11px solid #8fe8d0;border-left:0"></div>
<div class="a" style="left:139px;top:853px;width:120px;height:10px;border:1px solid;border-color:#8fe8d0 #2f7f6f #2f7f6f #8fe8d0"></div>
<div class="ar" style="left:262px;top:853px;border-left:11px solid #8fe8d0;border-right:0"></div>
<div class="bk" style="left:125px;top:864px;width:169px;height:1px"></div>
<div class="bt" style="left:131px;top:869px;width:160px;height:26px;justify-content:flex-start;padding-left:4px">Replace layers</div>
<div class="tog" style="left:272px;top:879px"></div>
<!-- right -->
<div class="tl" style="left:296px;top:380px;width:320px;height:517px"></div>
<div class="lb" style="left:296px;top:380px;width:320px;height:30px"></div>
<div class="bt" style="left:298px;top:382px;width:203px;height:27px;font:italic bold 15px/15px 'Liberation Mono',monospace">Categories (28)</div>
<div class="t" style="left:504px;top:388px">Meas:</div>
<div class="bt" style="left:556px;top:382px;width:59px;height:27px;justify-content:flex-start;padding-left:4px">All</div>
<div class="tog" style="left:597px;top:392px"></div>
<div class="a" style="left:296px;top:410px;width:301px;height:376px;border:1px solid #2f7f6f;border-right:2px solid #8fe8d0;border-bottom:2px solid #8fe8d0"></div>
<div class="bk" style="left:300px;top:506px;width:293px;height:15px"></div>
<div class="a" style="left:300px;top:416px;width:293px;height:360px;overflow:hidden;font:bold 15px/18px 'Liberation Mono',monospace;color:#08352b;white-space:pre">PTH annular Ring (12)
NPTH annular Ring (11)
Via annular Ring (6)
SMD annular Ring (5435)
Pad annular Ring (718)
<span style="color:#55ccaa;font-weight:normal">Coverage (2838)</span>
Rout spacing (592)
No bridge (109)
No bridge (Same Net) (104)
No Bridge (SMD Pads) (100)
SMDs Clearance Bridge (1579)
SMD to Pad Clearance Bridge (228)
Pad to Pad Clearance Bridge (36)
Pad to Pad Clearance Bridge (Same Net)
SM slivers (16)
SM local spacing (226)
Pad to Pad Spacing (1399)
Pad to Pad Spacing(Same Net) (388)
Pad to Non-Pad Spacing (18)
Non-Pad to Non-Pad Spacing (1)</div>
<div class="sb" style="left:603px;top:410px;width:13px;height:376px"></div>
<div class="ar" style="left:604px;top:411px;border-bottom:11px solid #8fe8d0;border-top:0"></div>
<div class="ar" style="left:604px;top:773px;border-top:11px solid #8fe8d0;border-bottom:0"></div>
<div class="a" style="left:296px;top:790px;width:301px;height:13px;background:#45a88e"></div>
<div class="ar" style="left:298px;top:791px;border-right:11px solid #8fe8d0;border-left:0"></div>
<div class="a" style="left:310px;top:791px;width:213px;height:11px;background:#55ccaa;border:1px solid;border-color:#8fe8d0 #2f7f6f #2f7f6f #8fe8d0"></div>
<div class="ar" style="left:585px;top:791px;border-left:11px solid #8fe8d0;border-right:0"></div>
<div class="bt" style="left:297px;top:807px;width:53px;height:23px">First</div>
<div class="bt" style="left:354px;top:807px;width:44px;height:23px">&lt;---</div>
<div class="bt" style="left:402px;top:807px;width:44px;height:23px">---&gt;</div>
<div class="bt" style="left:450px;top:807px;width:44px;height:23px">Last</div>
<div class="t" style="left:498px;top:811px">Index:</div>
<div class="a" style="left:556px;top:807px;width:59px;height:23px;border:2px solid;border-color:#2f7f6f #8fe8d0 #8fe8d0 #2f7f6f;font:15px/15px 'Liberation Mono',monospace;padding:1px 0 0 5px;color:#0c1f1c">11216</div>
<div class="bk" style="left:296px;top:832px;width:305px;height:2px"></div>
<div class="a" style="left:296px;top:832px;width:2px;height:31px;background:#000"></div>
<div class="lb" style="left:298px;top:834px;width:125px;height:29px"></div>
<div class="bt" style="left:302px;top:834px;width:115px;height:28px;justify-content:flex-start;padding-left:5px">Auto Zoom</div>
<div class="tog" style="left:397px;top:844px"></div>
<div class="bk" style="left:418px;top:832px;width:2px;height:31px"></div>
<div class="t" style="left:421px;top:840px">Sv:</div>
<div class="a" style="left:447px;top:832px;width:68px;height:32px;background:#22c822"></div>
<div class="a" style="left:453px;top:834px;width:59px;height:27px;background:#22dd22;border:2px solid;border-color:#7cf07c #148a14 #148a14 #7cf07c"></div>
<div class="tog" style="left:494px;top:844px"></div>
<div class="a" style="left:520px;top:838px;width:13px;height:13px;border:1px solid;border-color:#2f7f6f #8fe8d0 #8fe8d0 #2f7f6f"></div>
<div class="t" style="left:537px;top:837px;font-weight:bold;font-size:14.500px">Show All</div>
<div class="bt" style="left:514px;top:867px;width:30px;height:29px;padding:2px"><div style="width:22px;height:22px;border:1px solid #000;font:11px/11px 'Liberation Mono',monospace;text-align:center;font-weight:normal">DEL<div style="width:7px;height:7px;background:#e11;border-radius:50%;margin:1px auto"></div></div></div>
<div class="bt" style="left:548px;top:867px;width:30px;height:29px;padding:2px"><div style="width:22px;height:22px;border:1px solid #000;font:11px/11px 'Liberation Mono',monospace;text-align:center;font-weight:normal">REF<div style="width:7px;height:7px;background:#1d1;border-radius:50%;margin:1px auto"></div></div></div>
<div class="bt" style="left:582px;top:867px;width:32px;height:29px;padding:2px"><div style="width:25px;height:22px;border:1px solid #000;font:10.500px/11px 'Liberation Mono',monospace;text-align:center;font-weight:normal">UNDO<div style="width:7px;height:7px;border:2px solid #a80;border-radius:50%;margin:1px auto"></div></div></div>
<div class="bk" style="left:294px;top:380px;width:2px;height:517px"></div>
<!-- status -->
<div class="bk" style="left:123px;top:897px;width:496px;height:3px"></div>
<div class="tl" style="left:123px;top:900px;width:496px;height:19px"></div>
<div class="t" style="left:239px;top:902px;font-size:14.900px;font-weight:normal;-webkit-text-stroke:.3px #0c1f1c">bs 1.33mil  oval42.433x54.244</div>
<div class="a" style="left:123px;top:920px;width:496px;height:20px;background:#fffacd;font:bold 15px/21px 'Liberation Mono',monospace;color:#111;padding-left:2px;white-space:pre">ERF--&gt; coverage = 2.5 6 8</div>
<div class="lb" style="left:123px;top:941px;width:496px;height:31px;background:#9fdbdb"></div>
<div class="bt" style="left:125px;top:943px;width:287px;height:28px;padding-top:1px">Close</div>
<div class="bt" style="left:418px;top:943px;width:28px;height:28px;padding:2px"><svg width="22" height="22"><rect width="22" height="22" fill="#000"/><rect x="2" y="1" width="9" height="15" fill="#000"/><rect x="11" y="1" width="10" height="15" fill="#f0f020"/><rect x="7" y="3" width="2" height="2" fill="#fff"/><rect x="14" y="3" width="2" height="2" fill="#000"/></svg></div>
<div class="bt" style="left:452px;top:943px;width:28px;height:28px;padding:2px"><svg width="22" height="22"><rect x=".5" y=".5" width="21" height="21" fill="#000" stroke="#000"/><rect x="2" y="2" width="18" height="12" fill="#111" stroke="#9fdbdb"/><circle cx="8" cy="10" r="3.500" fill="#e11"/><path d="M8 10h8M15 4v9" stroke="#e11" stroke-width="1.500"/><path d="M2 17h18" stroke="#9fdbdb"/></svg></div>
<div class="bt" style="left:486px;top:943px;width:28px;height:28px;padding:2px"><svg width="22" height="22"><rect x=".5" y=".5" width="21" height="21" fill="#9fdbdb" stroke="#000"/><text x="11" y="15" text-anchor="middle" font-family="Liberation Mono,monospace" font-size="10" fill="#222">REF</text><path d="M3 3L19 19M19 3L3 19" stroke="#d33" stroke-width="1.600"/></svg></div>
<div class="bt" style="left:520px;top:943px;width:28px;height:28px;padding:2px"><svg width="22" height="22"><path d="M.5.5H21.500V16L16 21.500H.5Z" fill="#22dd22" stroke="#000"/><text x="11" y="15" text-anchor="middle" font-family="Liberation Serif,serif" font-weight="bold" font-size="12" fill="#000">1/2</text></svg></div>
<div class="bt" style="left:554px;top:943px;width:28px;height:28px;padding:2px"><svg width="22" height="22"><path d="M.5.5H21.500V16L16 21.500H.5Z" fill="#f8f020" stroke="#000"/><path d="M3 5H18M3 8H18M3 11H18M3 14H14M3 17H12" stroke="#333"/></svg></div>
<div class="a" style="left:588px;top:943px;width:29px;height:28px;border:3px solid #c01818;padding:1px;background:#9fdbdb"><svg width="21" height="20"><path d="M1 18H20" stroke="#000"/><rect x="3" y="9" width="3" height="8" fill="#d22"/><rect x="7" y="5" width="3" height="12" fill="#1a9a1a"/><rect x="11" y="2" width="3" height="15" fill="#22b"/><rect x="15" y="7" width="3" height="10" fill="#a3a"/></svg></div>

<!-- IME bar -->
<div class="a" style="left:1768px;top:1012px;width:79px;height:23px;background:linear-gradient(180deg,#9aa4a8,#3a4448 40%,#2c3438);display:flex;align-items:center">
 <div style="width:8px;height:18px;margin-left:4px;background:repeating-linear-gradient(180deg,#888 0 2px,transparent 2px 4px)"></div>
 <div style="font:11px/12px 'Liberation Mono',monospace;color:#eef;margin-left:9px">CH</div>
 <div style="width:15px;height:15px;border-radius:50%;background:#1f3fc0;border:1px solid #dde;color:#fff;font:bold 11px/13px 'Liberation Sans',sans-serif;text-align:center;margin-left:7px">?</div>
</div>

</body></html>
